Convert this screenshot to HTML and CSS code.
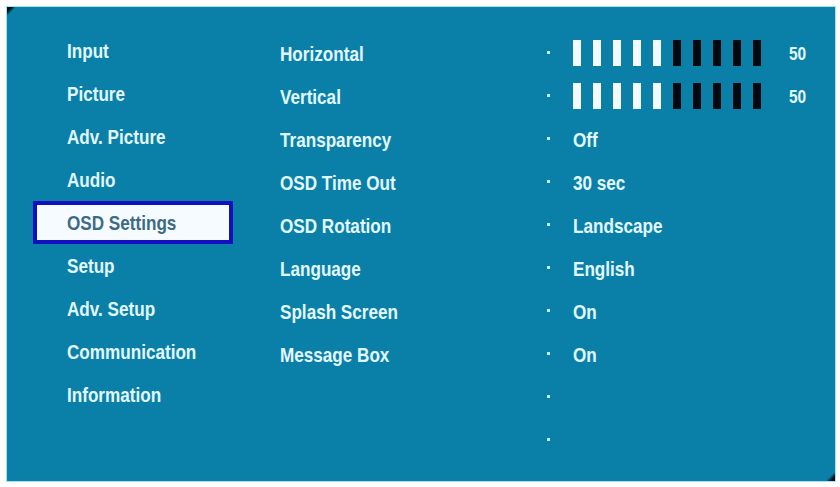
FILE: index.html
```html
<!DOCTYPE html>
<html>
<head>
<meta charset="utf-8">
<title>OSD Settings</title>
<link rel="stylesheet" href="styles.css">
</head>
<body>
<div class="osd">
  <ul class="nav">
    <li><span class="t">Input</span></li>
    <li><span class="t">Picture</span></li>
    <li><span class="t">Adv. Picture</span></li>
    <li><span class="t">Audio</span></li>
    <li class="sel"><span class="t">OSD Settings</span></li>
    <li><span class="t">Setup</span></li>
    <li><span class="t">Adv. Setup</span></li>
    <li><span class="t">Communication</span></li>
    <li><span class="t">Information</span></li>
  </ul>
  <ul class="items">
    <li><span class="t">Horizontal</span></li>
    <li><span class="t">Vertical</span></li>
    <li><span class="t">Transparency</span></li>
    <li><span class="t">OSD Time Out</span></li>
    <li><span class="t">OSD Rotation</span></li>
    <li><span class="t">Language</span></li>
    <li><span class="t">Splash Screen</span></li>
    <li><span class="t">Message Box</span></li>
  </ul>
  <ul class="values">
    <li><span class="dot"></span><span class="bars"><i class="on"></i><i class="on"></i><i class="on"></i><i class="on"></i><i class="on"></i><i></i><i></i><i></i><i></i><i></i></span><span class="t num">50</span></li>
    <li><span class="dot"></span><span class="bars"><i class="on"></i><i class="on"></i><i class="on"></i><i class="on"></i><i class="on"></i><i></i><i></i><i></i><i></i><i></i></span><span class="t num">50</span></li>
    <li><span class="dot"></span><span class="t">Off</span></li>
    <li><span class="dot"></span><span class="t">30 sec</span></li>
    <li><span class="dot"></span><span class="t">Landscape</span></li>
    <li><span class="dot"></span><span class="t">English</span></li>
    <li><span class="dot"></span><span class="t">On</span></li>
    <li><span class="dot"></span><span class="t">On</span></li>
    <li><span class="dot"></span></li>
    <li><span class="dot"></span></li>
  </ul>
</div>
</body>
</html>
```

FILE: styles.css
```css
html, body {
  margin: 0;
  padding: 0;
  background: #ffffff;
}

.osd {
  position: relative;
  box-sizing: border-box;
  margin: 6px 0 0 6px;
  width: 830px;
  height: 476px;
  border: 1px solid #a6e2f0;
  background: #0a80a9;
  display: flex;
  padding-top: 24px;
  font-family: "Liberation Sans", Arial, sans-serif;
  font-weight: bold;
  font-size: 21px;
  color: #e2f8ff;
}

.osd::before {
  content: "";
  position: absolute;
  left: 0;
  top: 0;
  width: 8px;
  height: 8px;
  background: linear-gradient(135deg, #05101a 0%, #05101a 30%, rgba(10,128,169,0) 60%);
}

.osd::after {
  content: "";
  position: absolute;
  right: 0;
  bottom: 0;
  width: 8px;
  height: 8px;
  background: linear-gradient(315deg, #05101a 0%, #05101a 30%, rgba(10,128,169,0) 60%);
}

ul {
  list-style: none;
  margin: 0;
  padding: 0;
}

li {
  height: 43px;
  line-height: 43px;
  white-space: nowrap;
}

.t {
  display: inline-block;
  transform: scaleX(0.815);
  transform-origin: 0 50%;
}

.nav {
  box-sizing: border-box;
  width: 273px;
  padding-left: 26px;
  margin-top: -2px;
}

.nav li {
  box-sizing: border-box;
  width: 200px;
  border: 4px solid transparent;
  padding-left: 30px;
  line-height: 35px;
}

.nav li.sel {
  border-color: #1010c0;
  background: #f6fbff;
  color: #3d6c82;
}

.items {
  width: 267px;
  padding-top: 1px;
}

.values {
  flex: 1;
  padding-top: 1px;
}

.values li {
  display: flex;
  align-items: center;
}

.dot {
  width: 3px;
  height: 3px;
  background: #c4f0fb;
  margin-right: 23px;
  margin-top: -2px;
}

.bars {
  display: flex;
  gap: 12px;
  margin-top: -1px;
}

.bars i {
  display: block;
  width: 8px;
  height: 26px;
  background: #04090f;
}

.bars i.on {
  background: #f4fbff;
}

.num {
  margin-left: 28px;
  font-size: 19px;
}
```
